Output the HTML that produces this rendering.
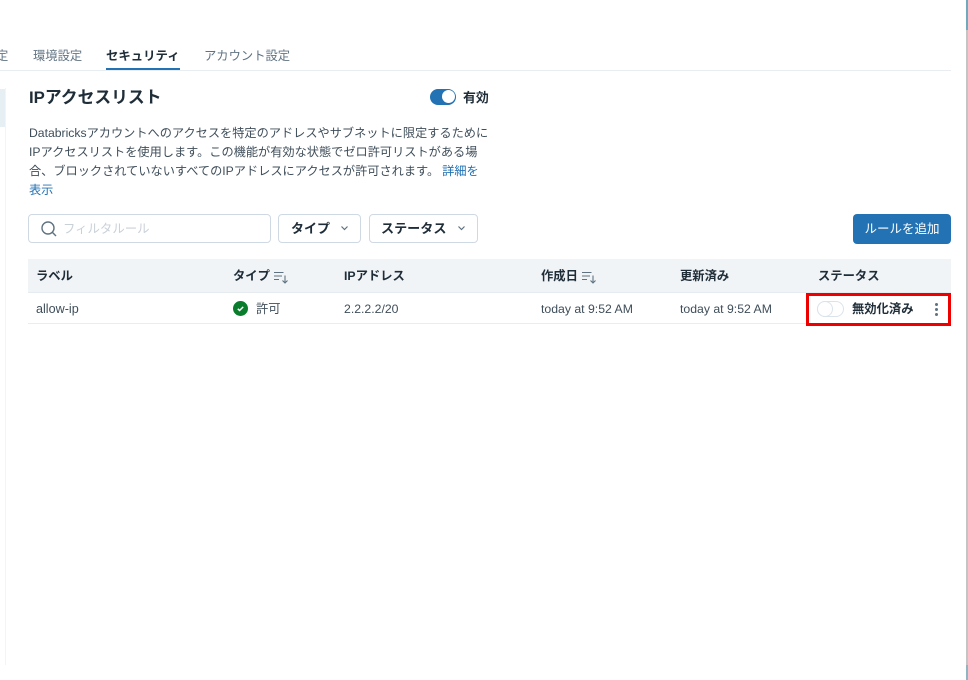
<!DOCTYPE html>
<html lang="ja"><head><meta charset="utf-8"><title>IPアクセスリスト</title>
<style>
html,body{margin:0;padding:0;background:#fff}
body{width:968px;height:680px;position:relative;overflow:hidden;font-family:"Liberation Sans","Noto Sans CJK JP",sans-serif;color:#3a4a56;font-size:12px}
.a{position:absolute;white-space:nowrap}
.b{font-weight:700;color:#1f2d38}
.tab{font-size:12.3px;top:47px;line-height:18px;color:#5f7281}
.btn{position:absolute;top:214px;height:29px;box-sizing:border-box;border:1px solid #cfd9e3;border-radius:4px;background:#fff}
.th{top:267px;line-height:18px;font-size:12.3px;font-weight:700;color:#1f2d38}
.td{top:300px;line-height:18px;font-size:12.25px;color:#3f4e5a}
</style></head><body>
<div class="a" style="left:5px;top:88px;width:1px;height:577px;background:#f3f4f5"></div>
<div class="a" style="left:0;top:89px;width:5px;height:38px;background:#e6f0f4"></div>
<div class="a" style="left:966px;top:0;width:2px;height:680px;background:#c4c4c4"></div>
<div class="a" style="left:966px;top:0;width:2px;height:30px;background:#6fa9bd"></div>
<div class="a" style="left:966px;top:665px;width:2px;height:15px;background:#8fb5c2"></div>

<div class="a tab" style="left:-4px">定</div>
<div class="a tab" style="left:33px">環境設定</div>
<div class="a tab" style="left:106px;font-size:12.4px;font-weight:700;color:#1f2d38">セキュリティ</div>
<div class="a tab" style="left:204px">アカウント設定</div>
<div class="a" style="left:0;top:70px;width:951px;height:1px;background:#e8edf2"></div>
<div class="a" style="left:106px;top:68px;width:74px;height:2px;background:#2272b4"></div>

<div class="a b" style="left:29px;top:86px;font-size:16.8px;line-height:24px;font-weight:700;color:#1f2d38">IPアクセスリスト</div>
<div class="a" style="left:430px;top:89px;width:26px;height:16px;border-radius:8px;background:#2272b4"></div>
<div class="a" style="left:442px;top:90px;width:13px;height:13px;border-radius:50%;background:#fff"></div>
<div class="a b" style="left:463px;top:89px;font-size:12.9px;line-height:17px">有効</div>

<div class="a" style="left:29px;top:124px;line-height:19px;font-size:12.2px;color:#3f4e5a">Databricksアカウントへのアクセスを特定のアドレスやサブネットに限定するために<br>IPアクセスリストを使用します。この機能が有効な状態でゼロ許可リストがある場<br>合、ブロックされていないすべてのIPアドレスにアクセスが許可されます。<span style="color:#2272b4;margin-left:3px">詳細を</span><br><span style="color:#2272b4">表示</span></div>

<div class="btn" style="left:28px;width:243px"></div>
<svg class="a" style="left:41px;top:221px" width="16" height="16" viewBox="0 0 16 16" fill="none" stroke="#5f7281" stroke-width="1.4"><circle cx="7" cy="7" r="6"/><path d="M11.300 11.300L15 15"/></svg>
<div class="a" style="left:63px;top:221px;line-height:17px;font-size:12.4px;color:#c9d1d8">フィルタルール</div>

<div class="btn" style="left:278px;width:83px"></div>
<div class="a b" style="left:291px;top:220px;font-size:13px;line-height:17px">タイプ</div>
<svg class="a" style="left:340px;top:225px" width="9" height="7" viewBox="0 0 9 7" fill="none" stroke="#5f7281" stroke-width="1.2"><path d="M1.500 1.500L4.500 4.500L7.500 1.500"/></svg>
<div class="btn" style="left:369px;width:109px"></div>
<div class="a b" style="left:381px;top:220px;font-size:13.1px;line-height:17px">ステータス</div>
<svg class="a" style="left:457px;top:225px" width="9" height="7" viewBox="0 0 9 7" fill="none" stroke="#5f7281" stroke-width="1.2"><path d="M1.500 1.500L4.500 4.500L7.500 1.500"/></svg>

<div class="a" style="left:853px;top:214px;width:98px;height:30px;border-radius:4px;background:#2272b4;color:#fff;font-size:12.5px;line-height:30px;text-align:center">ルールを追加</div>

<div class="a" style="left:28px;top:259px;width:923px;height:33px;background:#f1f4f7"></div>
<div class="a" style="left:28px;top:292px;width:923px;height:1px;background:#e6ebf0"></div>
<div class="a" style="left:28px;top:323px;width:923px;height:1px;background:#e8edf2"></div>

<div class="a th" style="left:36px">ラベル</div>
<div class="a th" style="left:233px">タイプ</div>
<svg class="a" style="left:274px;top:271px" width="15" height="13" viewBox="0 0 15 13" fill="none" stroke="#5f7281" stroke-width="1.100"><path d="M0 1.500H9.500M0 5H8M0 8.500H5M11 4.500V12M8.500 9.500L11 12L13.500 9.500"/></svg>
<div class="a th" style="left:344px">IPアドレス</div>
<div class="a th" style="left:541px">作成日</div>
<svg class="a" style="left:582px;top:271px" width="15" height="13" viewBox="0 0 15 13" fill="none" stroke="#5f7281" stroke-width="1.100"><path d="M0 1.500H9.500M0 5H8M0 8.500H5M11 4.500V12M8.500 9.500L11 12L13.500 9.500"/></svg>
<div class="a th" style="left:680px">更新済み</div>
<div class="a th" style="left:818px">ステータス</div>

<div class="a td" style="left:36px;font-size:12.6px">allow-ip</div>
<svg class="a" style="left:233px;top:301px" width="15" height="15" viewBox="0 0 15 15"><circle cx="7.500" cy="7.500" r="7.500" fill="#0a7d2c"/><path d="M4.800 7.800L6.600 9.500L10.200 5.900" fill="none" stroke="#fff" stroke-width="1.500"/></svg>
<div class="a td" style="left:256px">許可</div>
<div class="a td" style="left:344px">2.2.2.2/20</div>
<div class="a td" style="left:541px">today at 9:52 AM</div>
<div class="a td" style="left:680px">today at 9:52 AM</div>

<div class="a" style="left:817px;top:301px;width:27px;height:16px;box-sizing:border-box;border:1px solid #dbe3ea;border-radius:8px;background:#fff"></div>
<div class="a" style="left:817px;top:301px;width:16px;height:16px;box-sizing:border-box;border:1px solid #dbe3ea;border-radius:50%;background:#fff"></div>
<div class="a b" style="left:852px;top:300px;font-size:12.3px;line-height:18px">無効化済み</div>
<div class="a" style="left:935px;top:303px;width:3px;height:3px;border-radius:50%;background:#5f7281"></div>
<div class="a" style="left:935px;top:308px;width:3px;height:3px;border-radius:50%;background:#5f7281"></div>
<div class="a" style="left:935px;top:313px;width:3px;height:3px;border-radius:50%;background:#5f7281"></div>
<div class="a" style="left:806px;top:293px;width:145px;height:33px;box-sizing:border-box;border:3px solid #ee0000"></div>
</body></html>
